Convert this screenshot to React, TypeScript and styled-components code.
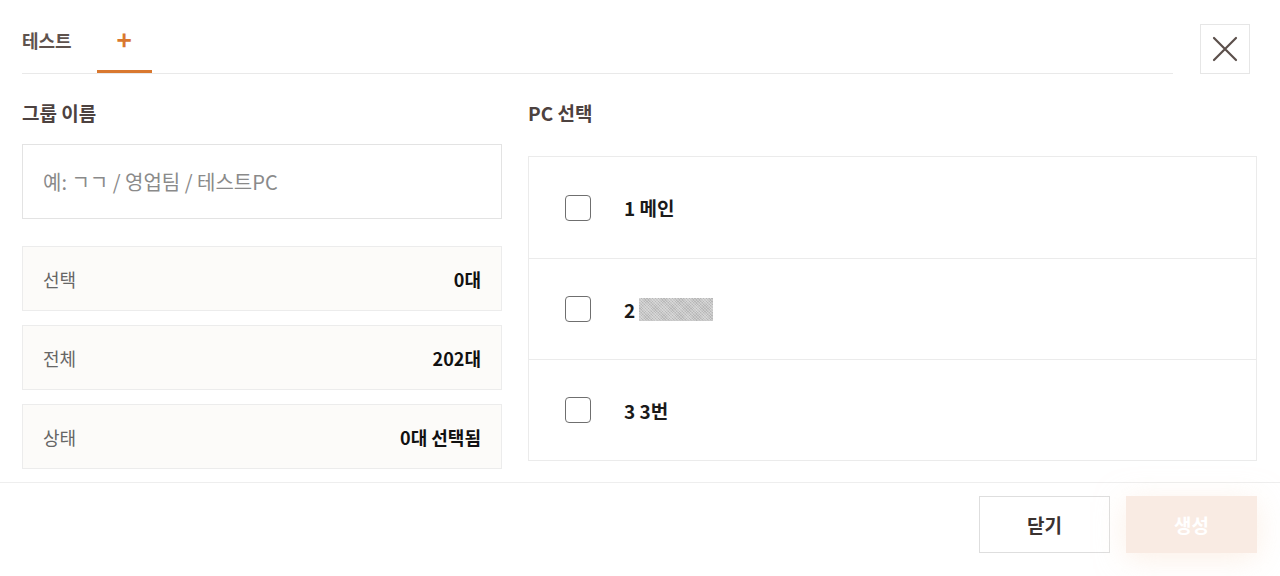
import React from "react";
import styled, { createGlobalStyle } from "styled-components";

const Global = createGlobalStyle`
  html, body { margin: 0; padding: 0; background: #ffffff; }
  body { font-family: "Noto Sans CJK KR", "Noto Sans", sans-serif; }
  * { box-sizing: border-box; }
`;

const Page = styled.div`
  width: 1280px;
  height: 576px;
  display: flex;
  flex-direction: column;
  background: #fff;
  overflow: hidden;
`;

const Header = styled.div`
  display: flex;
  align-items: flex-end;
  gap: 27px;
  padding: 0 30px 0 22px;
  height: 74px;
`;

const TabBar = styled.div`
  flex: 1;
  display: flex;
  gap: 25px;
  height: 74px;
  border-bottom: 1px solid #e9e9e9;
`;

const Tab = styled.div<{ $active?: boolean; $plus?: boolean }>`
  height: 73px;
  padding-top: ${(p) => (p.$plus ? "26px" : "27px")};
  min-width: ${(p) => (p.$plus ? "55px" : "auto")};
  text-align: center;
  line-height: 26px;
  font-size: ${(p) => (p.$plus ? "26px" : "18px")};
  font-weight: 700;
  color: ${(p) => (p.$plus ? "#d9782f" : "#5e524d")};
  border-bottom: 3px solid ${(p) => (p.$active ? "#d9782f" : "transparent")};
`;

const CloseButton = styled.button`
  width: 50px;
  height: 50px;
  border: 1px solid #e6e6e6;
  background: #fff;
  display: flex;
  align-items: center;
  justify-content: center;
  padding: 0;
`;

const Body = styled.div`
  display: grid;
  grid-template-columns: 480px 1fr;
  column-gap: 26px;
  padding: 26px 23px 13px 22px;
`;

const Column = styled.div`
  display: flex;
  flex-direction: column;
`;

const SectionLabel = styled.div<{ $gap: number }>`
  font-size: 19px;
  line-height: 26px;
  font-weight: 700;
  color: #4d4240;
  margin-bottom: ${(p) => p.$gap}px;
`;

const NameInput = styled.input`
  width: 100%;
  height: 75px;
  border: 1px solid #e3e3e3;
  padding: 0 20px;
  font-family: "Noto Sans CJK KR", "Noto Sans", sans-serif;
  font-size: 20px;
  color: #333;
  outline: none;
  background: #fff;
  &::placeholder { color: #8a8a8a; }
`;

const Stats = styled.div`
  display: flex;
  flex-direction: column;
  gap: 14px;
  margin-top: 27px;
`;

const StatBox = styled.div`
  height: 65px;
  display: flex;
  align-items: center;
  justify-content: space-between;
  padding: 0 20px 0 20px;
  background: #fcfbf9;
  border: 1px solid #ececec;
`;

const StatLabel = styled.span`
  font-size: 18px;
  color: #666;
`;

const StatValue = styled.span`
  font-size: 18px;
  font-weight: 700;
  color: #111;
`;

const List = styled.div`
  border: 1px solid #ebebeb;
  display: flex;
  flex-direction: column;
`;

const Row = styled.label`
  height: 101px;
  display: flex;
  align-items: center;
  padding-left: 36px;
  gap: 33px;
  & + & { border-top: 1px solid #ebebeb; }
`;

const Box = styled.span`
  width: 26px;
  height: 26px;
  border: 1.5px solid #6f6f6f;
  border-radius: 4px;
  background: #fff;
  flex: none;
`;

const RowText = styled.span`
  font-size: 19px;
  font-weight: 700;
  color: #1a1a1a;
  display: flex;
  align-items: center;
  gap: 4px;
`;

const Mosaic = styled.span`
  display: inline-block;
  width: 74px;
  height: 23px;
  background-color: #c6c6c6;
  background-image: repeating-linear-gradient(45deg, rgba(255,255,255,0.3) 0 1px, transparent 1px 2px),
    repeating-linear-gradient(-45deg, rgba(150,150,150,0.3) 0 1px, transparent 1px 2px);
`;

const Footer = styled.div`
  border-top: 1px solid #eeeeee;
  padding: 13px 23px 23px;
  display: flex;
  justify-content: flex-end;
  gap: 16px;
`;

const FooterButton = styled.button<{ $primary?: boolean }>`
  width: 131px;
  height: 57px;
  font-family: "Noto Sans CJK KR", "Noto Sans", sans-serif;
  font-size: 19px;
  font-weight: 700;
  border: ${(p) => (p.$primary ? "none" : "1px solid #dedede")};
  background: ${(p) => (p.$primary ? "#f9ebe3" : "#fff")};
  color: ${(p) => (p.$primary ? "#ffffff" : "#3a3230")};
  box-shadow: ${(p) => (p.$primary ? "0 6px 30px rgba(250, 228, 212, 0.55)" : "none")};
`;

const pcs = [
  { id: 1, name: "메인" },
  { id: 2, name: null },
  { id: 3, name: "3번" },
];

export default function App() {
  return (
    <Page>
      <Global />
      <Header>
        <TabBar>
          <Tab>테스트</Tab>
          <Tab $active $plus>+</Tab>
        </TabBar>
        <CloseButton aria-label="닫기">
          <svg width="26" height="26" viewBox="0 0 26 26">
            <path d="M2 2 L24 24 M24 2 L2 24" stroke="#5b4f4b" strokeWidth="2.2" strokeLinecap="round" />
          </svg>
        </CloseButton>
      </Header>
      <Body>
        <Column>
          <SectionLabel $gap={18}>그룹 이름</SectionLabel>
          <NameInput placeholder="예: ㄱㄱ / 영업팀 / 테스트PC" />
          <Stats>
            <StatBox>
              <StatLabel>선택</StatLabel>
              <StatValue>0대</StatValue>
            </StatBox>
            <StatBox>
              <StatLabel>전체</StatLabel>
              <StatValue>202대</StatValue>
            </StatBox>
            <StatBox>
              <StatLabel>상태</StatLabel>
              <StatValue>0대 선택됨</StatValue>
            </StatBox>
          </Stats>
        </Column>
        <Column>
          <SectionLabel $gap={30}>PC 선택</SectionLabel>
          <List>
            {pcs.map((pc) => (
              <Row key={pc.id}>
                <Box />
                <RowText>
                  {pc.id}
                  {pc.name ? ` ${pc.name}` : <Mosaic />}
                </RowText>
              </Row>
            ))}
          </List>
        </Column>
      </Body>
      <Footer>
        <FooterButton>닫기</FooterButton>
        <FooterButton $primary>생성</FooterButton>
      </Footer>
    </Page>
  );
}
